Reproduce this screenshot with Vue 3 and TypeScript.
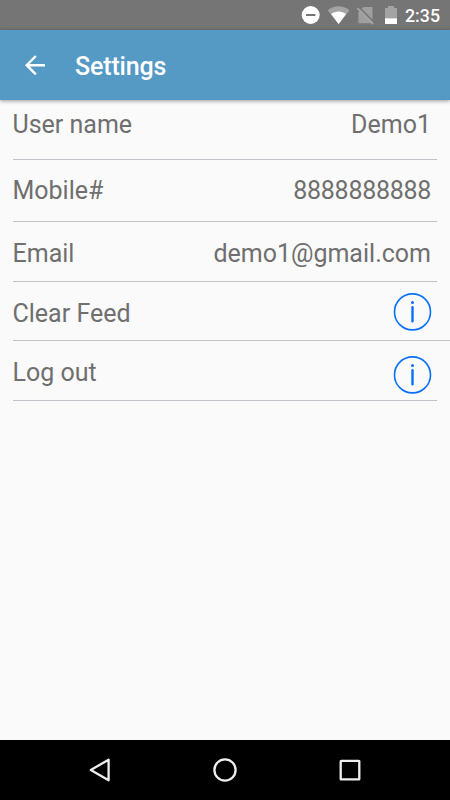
<script setup lang="ts">
interface Row {
  key: string
  label: string
  value?: string
}

const rows: Row[] = [
  { key: 'user', label: 'User name', value: 'Demo1' },
  { key: 'mobile', label: 'Mobile#', value: '8888888888' },
  { key: 'email', label: 'Email', value: 'demo1@gmail.com' },
  { key: 'clear', label: 'Clear Feed' },
  { key: 'logout', label: 'Log out' },
]
</script>

<template>
  <div class="screen">
    <div class="status">
      <svg class="status-icons" width="100" height="30" viewBox="0 0 100 30">
        <circle cx="10.7" cy="15" r="9" fill="#fff" />
        <rect x="6" y="14" width="9.4" height="2" fill="#757575" />
        <path d="M27.7 10.2C33.8 4.9 43.2 4.9 49.5 10.2L38.6 24Z" fill="#a3a3a3" />
        <path d="M31 14.1C35.2 10.6 42 10.6 46.2 14.1L38.6 24Z" fill="#fff" />
        <path d="M63.5 7H72.5V23.2H58.4V12Z" fill="#9f9f9f" />
        <path d="M58.6 6.8L74.4 22.6" stroke="#757575" stroke-width="1.6" />
        <path d="M57.4 8.2L73.2 24" stroke="#a5a5a5" stroke-width="1.8" />
        <path d="M85 8H88V6H94V8H97V18.6H85Z" fill="#a3a3a3" />
        <path d="M85 18.3H97V24H85Z" fill="#fff" />
      </svg>
      <span class="time">2:35</span>
    </div>
    <header class="bar">
      <svg width="22" height="22" viewBox="0 0 22 22" fill="none" stroke="#fff" stroke-width="2.4">
        <path d="M21 11.2H3M11.8 2L2.7 11.2L11.8 20.4" />
      </svg>
      <h1>Settings</h1>
    </header>
    <main>
      <div v-for="row in rows" :key="row.key" class="row" :class="row.key">
        <span class="label">{{ row.label }}</span>
        <span v-if="row.value" class="value">{{ row.value }}</span>
        <svg v-else class="info" width="39" height="38" viewBox="0 0 39 38">
          <circle cx="19.5" cy="18.9" r="18" fill="none" stroke="#0a70fa" stroke-width="1.6" />
          <circle cx="19.5" cy="9.4" r="1.5" fill="#0a70fa" />
          <path d="M19.5 14.2V28.2" stroke="#0a70fa" stroke-width="2.4" stroke-linecap="round" />
        </svg>
      </div>
    </main>
    <nav class="nav">
      <svg width="30" height="30" viewBox="0 0 30 30"><path d="M5.8 15L23.6 4.7V25.3Z" /></svg>
      <svg width="30" height="30" viewBox="0 0 30 30"><circle cx="15" cy="15" r="10.6" /></svg>
      <svg width="30" height="30" viewBox="0 0 30 30"><rect x="5.7" y="5.8" width="18.6" height="18.6" rx=".5" /></svg>
    </nav>
  </div>
</template>

<style>
body {
  margin: 0;
}
</style>

<style scoped>
.screen {
  display: flex;
  flex-direction: column;
  width: 450px;
  height: 800px;
  overflow: hidden;
  background: #fafafa;
  font-family: Roboto, sans-serif;
}
.status {
  display: flex;
  flex: none;
  height: 30px;
  padding-left: 300px;
  background: #757575;
  color: #fff;
}
.time {
  margin-left: 5px;
  font-size: 17.8px;
  font-weight: 500;
  line-height: 32px;
}
.bar {
  display: flex;
  flex: none;
  align-items: center;
  height: 70px;
  padding-left: 24px;
  box-sizing: border-box;
  background: #5599c5;
  box-shadow: 0 1px 4px rgba(0, 0, 0, 0.4);
}
h1 {
  margin: 3px 0 0 29px;
  color: #fff;
  font-size: 25px;
  font-weight: 500;
  letter-spacing: -0.15px;
  line-height: 30px;
}
main {
  flex: 1;
}
.row {
  display: flex;
  justify-content: space-between;
  height: 60px;
  margin: 0 13px 0 12.5px;
  padding: 17px 6px 0 0;
  box-sizing: border-box;
  border-bottom: 1px solid #c1c1c7;
  color: #6f6f6f;
  font-size: 25px;
  line-height: 29px;
}
.user {
  padding-top: 10px;
}
.mobile {
  height: 62px;
  padding-top: 16px;
}
.mobile .value {
  letter-spacing: -0.28px;
}
.clear {
  height: 59px;
  margin-right: 0;
  padding-top: 11px;
  padding-right: 18px;
}
.clear .label {
  margin-top: 6px;
}
.logout {
  padding-top: 15px;
  padding-right: 5px;
}
.logout .label {
  margin-top: 2px;
}
.nav {
  display: flex;
  flex: none;
  align-items: center;
  justify-content: space-between;
  height: 60px;
  padding: 0 85px;
  box-sizing: border-box;
  background: #000;
}
.nav svg {
  fill: none;
  stroke: #eee;
  stroke-width: 2.3;
  stroke-linejoin: round;
}
</style>
